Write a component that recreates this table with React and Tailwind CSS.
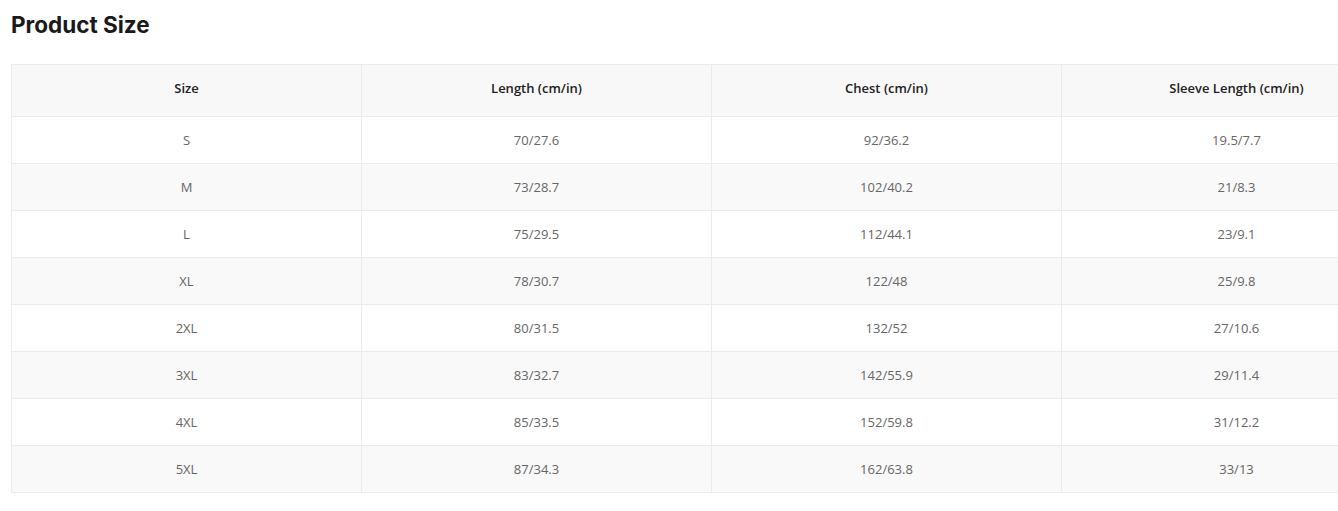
import React from "react";

const rows = [
  ["S", "70/27.6", "92/36.2", "19.5/7.7"],
  ["M", "73/28.7", "102/40.2", "21/8.3"],
  ["L", "75/29.5", "112/44.1", "23/9.1"],
  ["XL", "78/30.7", "122/48", "25/9.8"],
  ["2XL", "80/31.5", "132/52", "27/10.6"],
  ["3XL", "83/32.7", "142/55.9", "29/11.4"],
  ["4XL", "85/33.5", "152/59.8", "31/12.2"],
  ["5XL", "87/34.3", "162/63.8", "33/13"],
];

const headers = ["Size", "Length (cm/in)", "Chest (cm/in)", "Sleeve Length (cm/in)"];

const App = () => {
  return (
    <div className="w-[1338px] h-[511px] overflow-hidden bg-white font-['Open_Sans',sans-serif]">
      <div className="pl-[11px] pt-[9px]">
        <h2 className="text-[22.5px] leading-[32px] font-bold text-[#1a1a1a] font-['Inter',sans-serif]">
          Product Size
        </h2>
        <table className="mt-[23px] w-[1400px] border-collapse table-fixed border border-[#ebebeb]">
          <thead>
            <tr className="bg-[#f8f8f8]">
              {headers.map((h, i) => (
                <th
                  key={i}
                  className="h-[52px] w-[350px] pb-[4px] border border-[#ebebeb] text-[13px] font-semibold text-[#222] text-center"
                >
                  {h}
                </th>
              ))}
            </tr>
          </thead>
          <tbody>
            {rows.map((row, r) => (
              <tr key={r} className={r % 2 === 1 ? "bg-[#f9f9f9]" : "bg-white"}>
                {row.map((cell, c) => (
                  <td
                    key={c}
                    className="h-[47px] pt-[2px] border border-[#ebebeb] text-[13px] text-[#666] text-center"
                  >
                    {cell}
                  </td>
                ))}
              </tr>
            ))}
          </tbody>
        </table>
      </div>
    </div>
  );
};

export default App;
